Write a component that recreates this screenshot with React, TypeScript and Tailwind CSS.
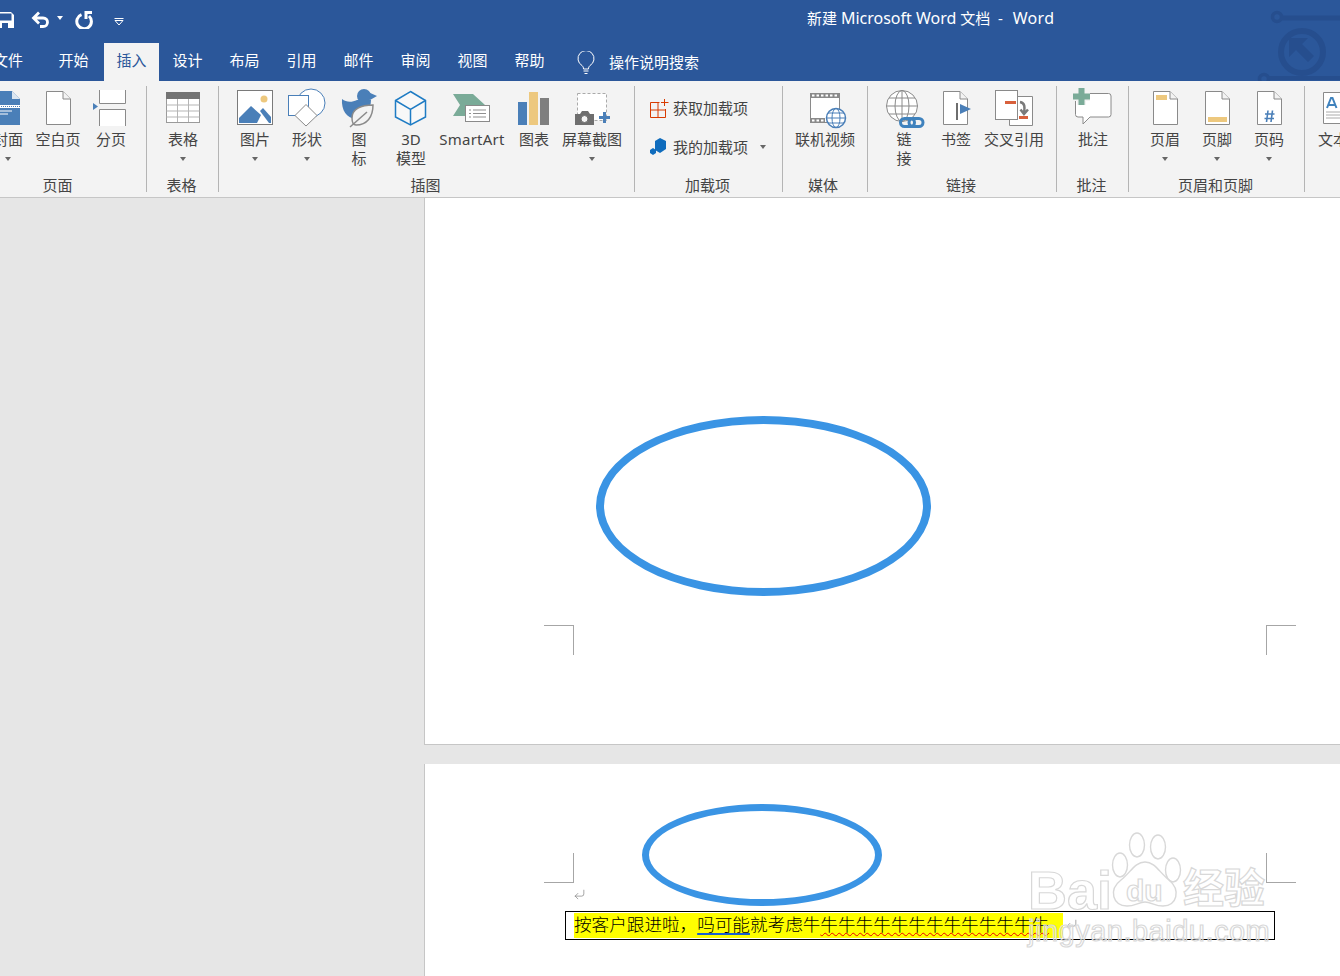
import React from 'react';
import { CornerDownLeft } from 'lucide-react';

const BLUE = '#4a7fb8';
const YEL = '#edc87e';
const GR = '#8a8a8a';

const Doc = ({ x = 10.5, children }: { x?: number; children?: React.ReactNode }) => (
    <>
        <path d={`M${x} 3.5H${x + 16.5}L${x + 24} 11V36.5H${x}Z`} fill="#fff" stroke={GR} />
        <path d={`M${x + 16.5} 3.5V11H${x + 24}`} fill="#f3f3f3" stroke={GR} />
        {children}
    </>
);

const Ico = ({ children }: { children: React.ReactNode }) => (
    <svg width="44" height="42" viewBox="0 0 44 42" className="block overflow-visible">{children}</svg>
);

const icons: Record<string, React.ReactNode> = {
    cover: (
        <Ico>
            <path d="M9 3H26L34 11V37H9Z" fill={BLUE} />
            <path d="M26 3V11H34Z" fill="#dbe6f1" />
            <path d="M9 17H34V20H9Z" fill="#fff" />
            <path d="M9 18.5H34" stroke={BLUE} strokeDasharray="1 1" />
            <path d="M9 23H26M9 26H22" stroke="#fff" />
        </Ico>
    ),
    blank: <Ico><Doc /></Ico>,
    pagebreak: (
        <Ico>
            <path d="M10.5 2V15.5H36.5V2M10.5 38V21.5H36.5V38" fill="#fff" stroke={GR} />
            <path d="M4 15L9 18.5L4 22Z" fill={BLUE} />
        </Ico>
    ),
    table: (
        <Ico>
            <rect x="5.5" y="4.5" width="33" height="30" fill="#fff" stroke="#9a9a9a" />
            <rect x="5" y="4" width="34" height="7" fill="#737373" />
            <path d="M5.5 17H38.5M5.5 23H38.5M5.5 29H38.5M16.5 11V34M27.5 11V34" stroke="#b5b5b5" />
        </Ico>
    ),
    picture: (
        <Ico>
            <rect x="4.5" y="2.5" width="35" height="34" fill="#fff" stroke="#7a7a7a" />
            <circle cx="31" cy="11" r="3.5" fill={YEL} />
            <path d="M6 35V30L18 18L28 27L24 35Z" fill={BLUE} />
            <path d="M27 23L30 20L38 29V35H36Z" fill={BLUE} />
        </Ico>
    ),
    shapes: (
        <Ico>
            <circle cx="26" cy="15" r="14" fill="#fff" stroke={BLUE} />
            <rect x="3.5" y="7.5" width="20" height="20" fill="#fff" stroke={BLUE} />
            <path d="M21 16.5L32 27.5L21 38L10 27.5Z" fill="#fff" stroke={GR} />
        </Ico>
    ),
    iconset: (
        <Ico>
            <circle cx="27" cy="8" r="7" fill={BLUE} />
            <path d="M31 4L40 8L33 12Z" fill={BLUE} />
            <path d="M5 11C9 14 14 15 20 12L34 12C34 22 28 27 22 30C12 33 4 24 5 11Z" fill={BLUE} />
            <path d="M15 30C15 21 24 17 36 17C36 29 30 37 19 37C16 37 15 33 15 30Z" fill="#f3f3f3" stroke={GR} strokeWidth="1.5" />
            <path d="M13 39L30 24" stroke={GR} strokeWidth="1.5" />
        </Ico>
    ),
    cube: (
        <Ico>
            <path d="M21.5 3.5L36.5 12.5V29L21.5 37L6.5 29V12.5Z" fill="#f8f8f8" stroke="#1f7cc4" strokeWidth="1.5" />
            <path d="M6.5 12.5L21.5 21.5L36.5 12.5M21.5 21.5V37" fill="none" stroke="#1f7cc4" strokeWidth="1.5" />
        </Ico>
    ),
    smartart: (
        <Ico>
            <path d="M3 6H23L35 17L23 28H3L10 17Z" fill="#7aab98" />
            <rect x="15.5" y="17.5" width="24" height="16" fill="#fff" stroke={GR} />
            <path d="M19 22H21M23 22H36M19 25.5H21M23 25.5H36M19 29H21M23 29H36" stroke="#8f8f8f" />
        </Ico>
    ),
    chart: (
        <Ico>
            <rect x="6" y="14" width="9" height="23" fill={BLUE} />
            <rect x="17" y="4" width="9" height="33" fill={YEL} />
            <rect x="28" y="10" width="9" height="27" fill="#7f7f7f" />
        </Ico>
    ),
    screenshot: (
        <Ico>
            <rect x="7.5" y="5.5" width="29" height="27" fill="#fff" stroke="#aaa" strokeDasharray="3 2" />
            <path d="M5 26H10L12 23H18L20 26H24V37H5Z" fill="#6e6e6e" />
            <circle cx="14.5" cy="31" r="3.5" fill="#f3f3f3" stroke="#6e6e6e" />
            <path d="M29 29.5H40M34.5 24V35" stroke={BLUE} strokeWidth="3" />
        </Ico>
    ),
    video: (
        <Ico>
            <rect x="7.5" y="5.5" width="29" height="29" fill="#fff" stroke={GR} />
            <rect x="7" y="5" width="30" height="5" fill="#8a8a8a" />
            <rect x="7" y="30" width="15" height="5" fill="#8a8a8a" />
            <path d="M9 7.5H36M9 32.5H21" stroke="#fff" strokeWidth="2" strokeDasharray="2.5 2" />
            <circle cx="33" cy="30" r="9.5" fill="#fff" stroke={BLUE} strokeWidth="1.5" />
            <ellipse cx="33" cy="30" rx="4" ry="9.5" fill="none" stroke={BLUE} />
            <path d="M23.5 30H42.5M25 25H41M25 35H41" stroke={BLUE} />
        </Ico>
    ),
    link: (
        <Ico>
            <circle cx="20" cy="18" r="15.5" fill="#fff" stroke={GR} />
            <ellipse cx="20" cy="18" rx="7" ry="15.5" fill="none" stroke={GR} />
            <path d="M4.5 18H35.5M7 10H33M7 26H33M20 2.5V33.5" stroke={GR} />
            <rect x="18.5" y="30.5" width="14" height="8" rx="4" fill="none" stroke="#3f82bd" strokeWidth="3" />
            <rect x="27" y="30.5" width="14" height="8" rx="4" fill="none" stroke="#3f82bd" strokeWidth="3" />
        </Ico>
    ),
    bookmark: (
        <Ico>
            <Doc x={9.5} />
            <rect x="22" y="15" width="2" height="17" fill="#6e6e6e" />
            <path d="M26 16L37 21L26 26Z" fill={BLUE} />
        </Ico>
    ),
    crossref: (
        <Ico>
            <path d="M25 8.5H40.5V37.5H17.5V30" fill="#fff" stroke={GR} />
            <rect x="3.5" y="2.5" width="22" height="29" fill="#fff" stroke={GR} />
            <path d="M13 14.5H24" stroke="#d8603c" strokeWidth="3" />
            <path d="M27 29.5H36" stroke="#d8603c" strokeWidth="3" />
            <path d="M28 14C33 15 33 19 32 25M28.5 21.5L32 26L36 21.5" fill="none" stroke="#7a7a7a" strokeWidth="2.5" />
        </Ico>
    ),
    comment: (
        <Ico>
            <path d="M7 5.5H37.5A2.5 2.5 0 0 1 40 8V26.5A2.5 2.5 0 0 1 37.5 29H19L12 36V29H7A2.5 2.5 0 0 1 4.5 26.5V8A2.5 2.5 0 0 1 7 5.5Z" fill="#fff" stroke={GR} />
            <path d="M2 8.5H19M10.5 0V17" stroke="#f3f3f3" strokeWidth="9" />
            <path d="M2 8.5H19M10.5 0V17" stroke="#7aab98" strokeWidth="6" />
        </Ico>
    ),
    header: <Ico><Doc><rect x="13" y="7" width="11" height="5" fill={YEL} /></Doc></Ico>,
    footer: <Ico><Doc><rect x="13" y="29" width="19" height="5" fill={YEL} /></Doc></Ico>,
    pagenum: (
        <Ico>
            <Doc>
                <path d="M21 22.5L19.5 34M25.5 22.5L24 34M18 26H27.5M17.5 30.5H27" stroke={BLUE} strokeWidth="1.6" />
            </Doc>
        </Ico>
    ),
    textbox: (
        <Ico>
            <path d="M12.5 4.5H42V35.5H12.5Z" fill="#fff" stroke={GR} />
            <path d="M16 20L20 10H21.5L25.5 20M17.5 17H24" fill="none" stroke="#3f82bd" strokeWidth="2" />
            <path d="M15 24H42M15 27H42M15 30H42" stroke="#aaa" />
        </Ico>
    ),
};

const Caret = () => <div className="w-0 h-0 border-x-[3.5px] border-x-transparent border-t-[4px] border-t-[#666]" />;

const Tool = ({ w, icon, lines, caret }: { w: string; icon: string; lines: string[]; caret?: boolean }) => (
    <div className={`${w} shrink-0 flex flex-col items-center`}>
        <div className="h-[42px] flex items-start">{icons[icon]}</div>
        {lines.map(l => <div key={l} className="h-[19px] leading-[19px] whitespace-nowrap">{l}</div>)}
        {caret && <div className="h-[19px] flex items-center"><Caret /></div>}
    </div>
);

const Group = ({ w, label, children, pad = '', labelPad = 'pr-[2px]' }: { w: string; label: string; children: React.ReactNode; pad?: string; labelPad?: string }) => (
    <div className={`${w} shrink-0 h-[106px] border-r border-[#b4b4b4] flex flex-col`}>
        <div className={`h-[84px] shrink-0 pt-[2px] flex ${pad}`}>{children}</div>
        <div className={`shrink-0 text-center leading-[19px] pt-[6px] whitespace-nowrap ${labelPad}`}>{label}</div>
    </div>
);

const tabs = ['设计', '布局', '引用', '邮件', '审阅', '视图', '帮助'];

const CropMark = ({ pos }: { pos: string }) => <div className={`absolute w-[30px] h-[30px] border-[#a6a6a6] ${pos}`} />;

const Ellipse = ({ pos }: { pos: string }) => <div className={`absolute rounded-[50%] border-[#3a94e4] ${pos}`} />;

const Watermark = () => (
    <div className="absolute left-[603px] top-[66px] w-[250px] h-[120px] pointer-events-none">
        <div className="absolute left-0 top-[30px] text-[54px] leading-[60px] font-bold text-white/40 [-webkit-text-stroke:1.2px_#d8d8d8] font-['Liberation_Sans',sans-serif]">Bai</div>
        <svg width="84" height="84" viewBox="0 0 84 84" className="absolute left-[77px] top-0">
            <g fill="#fff" fillOpacity="0.4" stroke="#d8d8d8" strokeWidth="1.4">
                <ellipse cx="32" cy="15" rx="7.5" ry="12" />
                <ellipse cx="53" cy="17" rx="7.5" ry="12" />
                <ellipse cx="15" cy="35" rx="7.5" ry="12" />
                <ellipse cx="68" cy="40" rx="7.5" ry="12" />
                <path d="M40 32C50 32 54 42 64 50C76 60 72 76 58 76C50 76 46 72 40 72C34 72 30 76 22 76C8 76 3 60 16 50C26 42 30 32 40 32Z" />
            </g>
        </svg>
        <div className="absolute left-[98px] top-[44px] text-[30px] leading-[34px] font-bold text-white/40 [-webkit-text-stroke:1.2px_#d8d8d8] font-['Liberation_Sans',sans-serif]">du</div>
        <div className="absolute left-[155px] top-[30px] text-[41px] leading-[50px] font-bold text-white/40 [-webkit-text-stroke:1.2px_#d8d8d8] font-['Noto_Sans_CJK_SC',sans-serif]">经验</div>
        <div className="absolute left-0 top-[84px] text-[29px] leading-[34px] tracking-[0.5px] text-white/30 [-webkit-text-stroke:1.2px_#d8d8d8] font-['Liberation_Sans',sans-serif] whitespace-nowrap">jingyan.baidu.com</div>
    </div>
);

export default function App() {
    return (
        <div className="relative w-[1340px] h-[976px] overflow-hidden flex flex-col bg-[#e6e6e6] text-[15px] font-['Noto_Sans','Noto_Sans_CJK_SC',sans-serif]">
            {/* Title + tabs */}
            <div className="relative h-[81px] shrink-0 bg-[#2b579a] text-white overflow-hidden">
                <svg width="84" height="84" viewBox="0 0 84 84" fill="none" stroke="#264e8e" className="absolute left-[1256px] top-0">
                    <circle cx="46" cy="52" r="21" strokeWidth="6" />
                    <path d="M33 38H52L46 44L58 56L52 62L40 50L33 57Z" fill="#264e8e" stroke="none" />
                    <circle cx="21" cy="17" r="4.5" strokeWidth="3.5" />
                    <path d="M25 18H84" strokeWidth="5" />
                    <circle cx="8" cy="79" r="4.5" strokeWidth="3.5" />
                    <path d="M13 78H84" strokeWidth="4" />
                </svg>
                <div className="h-[43px] flex">
                    <div className="w-[807px] flex items-center pb-[3px]">
                        <svg width="15" height="16" viewBox="0 0 15 16" className="ml-[-1px]">
                            <path d="M0 0H12L15 3V16H0Z" fill="#fff" />
                            <rect x="0" y="1.5" width="12.5" height="7" fill="#2b579a" />
                            <rect x="3" y="11" width="6" height="5" fill="#2b579a" />
                        </svg>
                        <svg width="20" height="18" viewBox="0 0 20 18" fill="none" stroke="#fff" strokeWidth="2.8" className="ml-[17px]">
                            <path d="M8 1.5L2.5 7L8 12.5M3 7H12C18 7 18 15.5 12 15.5H9" />
                        </svg>
                        <div className="ml-[6px] mb-[4px] w-0 h-0 border-x-[3.5px] border-x-transparent border-t-[4px] border-t-white" />
                        <svg width="18" height="18" viewBox="0 0 18 18" fill="none" stroke="#fff" strokeWidth="3" className="ml-[12px]">
                            <path d="M6.5 3.6A7.3 7.3 0 1 0 14 5M11 8V1.5H17" />
                        </svg>
                        <svg width="10" height="8" viewBox="0 0 10 8" fill="none" stroke="#fff" className="ml-[21px] mt-[3px]">
                            <path d="M0.5 0.5H9.5M1 2.5L5 7L9 2.5Z" />
                        </svg>
                    </div>
                    <div className="pt-[7px] leading-[22px] whitespace-pre">
                        新建 <span className="text-[16px]">Microsoft Word</span> 文档  -  <span className="text-[16px] ml-[2px] tracking-[0.3px]">Word</span>
                    </div>
                </div>
                <div className="h-[38px] flex items-stretch leading-[34px]">
                    <div className="w-[46px] ml-[-15px] text-center">文件</div>
                    <div className="w-[57px] ml-[14px] text-center">开始</div>
                    <div className="w-[55px] ml-[2px] bg-[#f3f3f3] text-[#2b579a] text-center">插入</div>
                    {tabs.map(t => <div key={t} className="w-[57px] text-center">{t}</div>)}
                    <div className="ml-[19px] flex items-center">
                        <svg width="18" height="23" viewBox="0 0 18 23" fill="none" stroke="#fff">
                            <path d="M5 14.5A8 8 0 1 1 13 14.5C12 15.5 11.5 16.5 11.5 18H6.5C6.5 16.5 6 15.5 5 14.5Z" />
                            <path d="M6.5 20H11.5M7.5 22.5H10.5" />
                        </svg>
                        <span className="ml-[14px]">操作说明搜索</span>
                    </div>
                </div>
            </div>

            {/* Ribbon */}
            <div className="h-[116.5px] shrink-0 bg-[#f3f3f3] border-b border-[#c6c6c6] pt-[5px] flex text-[#444] overflow-hidden">
                <Group w="w-[165px] ml-[-18px]" label="页面" labelPad="pr-[13px]">
                    <Tool w="w-[52px]" icon="cover" lines={['封面']} caret />
                    <Tool w="w-[48px]" icon="blank" lines={['空白页']} />
                    <Tool w="w-[58px]" icon="pagebreak" lines={['分页']} />
                </Group>
                <Group w="w-[72px]" label="表格">
                    <Tool w="w-[72px]" icon="table" lines={['表格']} caret />
                </Group>
                <Group w="w-[416px]" label="插图" pad="pl-[10px]">
                    <Tool w="w-[52px]" icon="picture" lines={['图片']} caret />
                    <Tool w="w-[52px]" icon="shapes" lines={['形状']} caret />
                    <Tool w="w-[52px]" icon="iconset" lines={['图', '标']} />
                    <Tool w="w-[52px]" icon="cube" lines={['3D', '模型']} />
                    <Tool w="w-[70px] tracking-[0.25px]" icon="smartart" lines={['SmartArt']} />
                    <Tool w="w-[54px]" icon="chart" lines={['图表']} />
                    <Tool w="w-[62px]" icon="screenshot" lines={['屏幕截图']} caret />
                </Group>
                <Group w="w-[148px]" label="加载项">
                    <div className="flex flex-col pl-[15px] pt-[10px]">
                        <div className="h-[20px] flex items-center">
                            <svg width="19" height="19" viewBox="0 0 19 19" fill="none" stroke="#d83b01" className="mr-[4px]">
                                <path d="M0.5 3.5H9.5M0.5 3.5V18.5H15.5V10M8 3.5V18.5M0.5 11H15.5M11 3.5H18.5M14.5 0V7" />
                            </svg>
                            获取加载项
                        </div>
                        <div className="h-[20px] mt-[19px] flex items-center">
                            <svg width="19" height="18" viewBox="0 0 19 18" className="mr-[4px]">
                                <path d="M10 0L16 3V11L10 15L5 12V3Z" fill="#0f6cbd" />
                                <path d="M3 10L6 12V15L3 17L0 15V12Z" fill="#0f6cbd" />
                            </svg>
                            我的加载项
                            <div className="ml-[12px]"><Caret /></div>
                        </div>
                    </div>
                </Group>
                <Group w="w-[85px]" label="媒体" labelPad="pr-[4px]">
                    <Tool w="w-[84px]" icon="video" lines={['联机视频']} />
                </Group>
                <Group w="w-[189px]" label="链接">
                    <Tool w="w-[72px]" icon="link" lines={['链', '接']} />
                    <Tool w="w-[32px]" icon="bookmark" lines={['书签']} />
                    <Tool w="w-[84px]" icon="crossref" lines={['交叉引用']} />
                </Group>
                <Group w="w-[72px]" label="批注">
                    <Tool w="w-[72px]" icon="comment" lines={['批注']} />
                </Group>
                <Group w="w-[176px]" label="页眉和页脚" pad="pl-[10px]">
                    <Tool w="w-[52px]" icon="header" lines={['页眉']} caret />
                    <Tool w="w-[52px]" icon="footer" lines={['页脚']} caret />
                    <Tool w="w-[52px]" icon="pagenum" lines={['页码']} caret />
                </Group>
                <div className="w-[60px] shrink-0 pt-[2px] pl-[6px] flex">
                    <Tool w="w-[44px]" icon="textbox" lines={['文本']} />
                </div>
            </div>

            {/* Document area */}
            <div className="flex-1 min-h-0 pl-[424px]">
                <div className="relative h-[547px] bg-white border-l border-b border-[#c6c6c6]">
                    <Ellipse pos="left-[171px] top-[218px] w-[335px] h-[180px] border-[8px]" />
                    <CropMark pos="left-[119px] top-[427px] border-t border-r" />
                    <CropMark pos="left-[841px] top-[427px] border-l border-t" />
                </div>
                <div className="relative mt-[19px] h-[300px] bg-white border-l border-[#c6c6c6] pl-[140px] pt-[147px]">
                    <Ellipse pos="left-[217px] top-[40px] w-[240px] h-[102px] border-[7px]" />
                    <CropMark pos="left-[119px] top-[89px] border-r border-b" />
                    <CropMark pos="left-[841px] top-[89px] border-l border-b" />
                    <CornerDownLeft size={13} strokeWidth={1.2} className="absolute left-[148px] top-[124px] text-[#777]" />
                    <div className="w-[710px] h-[29px] border border-black pl-[8px] pt-[1px] flex items-stretch text-[17.6px] text-black leading-[22px] whitespace-nowrap">
                        <span className="bg-[#ffff00] h-[25px] w-[489px] font-['Noto_Sans_CJK_SC',sans-serif] font-light">
                            按客户跟进啦，<span className="underline decoration-[#1a5fd0] decoration-[1.5px] underline-offset-2">吗可能</span>就考虑牛<span className="underline decoration-wavy decoration-[#f00000] decoration-1">牛牛牛牛牛牛牛牛牛牛牛牛牛</span>
                        </span>
                        <CornerDownLeft size={13} strokeWidth={1.2} className="ml-[2px] mt-[5px] text-[#777]" />
                    </div>
                    <Watermark />
                </div>
            </div>
        </div>
    );
}
